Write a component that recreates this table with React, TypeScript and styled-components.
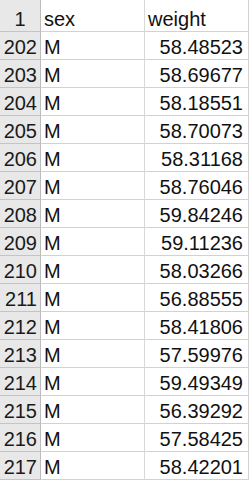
import React from "react";
import styled, { createGlobalStyle } from "styled-components";

const Global = createGlobalStyle`
  html, body { margin: 0; padding: 0; background: #ffffff; }
  body { font-family: "Liberation Sans", Arial, sans-serif; }
`;

const Sheet = styled.div`
  display: grid;
  grid-template-columns: 41px 104px 104px;
  width: 249px;
  overflow: hidden;
  background: #ffffff;
`;

const RowHead = styled.div<{ $tall?: boolean }>`
  box-sizing: border-box;
  height: ${(p) => (p.$tall ? 32 : 28)}px;
  background: #e8e8e8;
  border-right: 1px solid #bcbcbc;
  border-bottom: 1px solid #c4c4c4;
  display: flex;
  align-items: flex-end;
  justify-content: ${(p) => (p.$tall ? "center" : "flex-end")};
  padding: 0 3px 1px 0;
  padding-left: ${(p) => (p.$tall ? 3 : 0)}px;
  font-size: 20px;
  line-height: 22px;
  color: #1a1a1a;
`;

const Cell = styled.div<{ $tall?: boolean; $num?: boolean; $last?: boolean }>`
  box-sizing: border-box;
  height: ${(p) => (p.$tall ? 32 : 28)}px;
  border-bottom: 1px solid #d2d2d2;
  border-right: 1px solid ${(p) => (p.$last ? "#d2d2d2" : "#d8d8d8")};
  display: flex;
  align-items: flex-end;
  justify-content: ${(p) => (p.$num ? "flex-end" : "flex-start")};
  padding: 0 ${(p) => (p.$num ? 5 : 3)}px 1px 3px;
  font-size: 20px;
  line-height: 22px;
  color: #111111;
  white-space: nowrap;
`;

const rows: [number, string][] = [
  [202, "58.48523"],
  [203, "58.69677"],
  [204, "58.18551"],
  [205, "58.70073"],
  [206, "58.31168"],
  [207, "58.76046"],
  [208, "59.84246"],
  [209, "59.11236"],
  [210, "58.03266"],
  [211, "56.88555"],
  [212, "58.41806"],
  [213, "57.59976"],
  [214, "59.49349"],
  [215, "56.39292"],
  [216, "57.58425"],
  [217, "58.42201"],
];

export default function App() {
  return (
    <>
      <Global />
      <Sheet>
        <RowHead $tall>1</RowHead>
        <Cell $tall>sex</Cell>
        <Cell $tall $last>weight</Cell>
        {rows.map(([n, w]) => (
          <React.Fragment key={n}>
            <RowHead>{n}</RowHead>
            <Cell>M</Cell>
            <Cell $num $last>
              {w}
            </Cell>
          </React.Fragment>
        ))}
      </Sheet>
    </>
  );
}
